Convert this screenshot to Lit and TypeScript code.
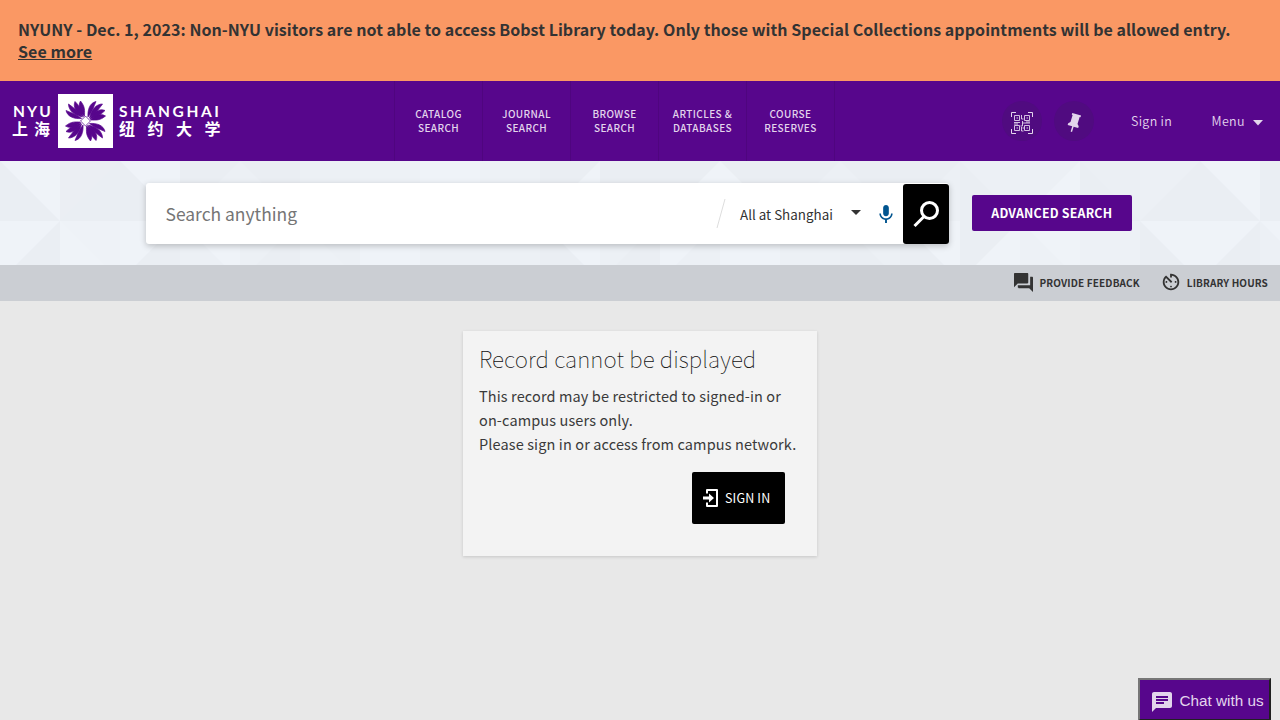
import { LitElement, html, css, svg } from "lit";
import { customElement } from "lit/decorators.js";

const LINKS = [["CATALOG", "SEARCH"], ["JOURNAL", "SEARCH"], ["BROWSE", "SEARCH"], ["ARTICLES &", "DATABASES"], ["COURSE", "RESERVES"]];

// Each tile: colour below the diagonal, colour above it, diagonal direction.
const L = "#eff3f8", D = "#eaeef3", M = "#ecf0f5", N = "#edf1f6";
type Tile = [string, string, string];
const TOP: Tile[] = [
  [D, L, "\\"], [D, "#ebeef3", "/"], [D, L, "\\"], [M, D, "/"], [M, D, "\\"], [M, M, "/"], [N, N, "/"], [L, L, "/"], [N, N, "/"], [L, D, "/"],
  [D, D, "/"], [L, D, "/"], [L, D, "\\"], [M, D, "/"], [M, D, "\\"], [M, D, "/"], [D, M, "\\"], [L, M, "/"], [D, "#ebeff4", "\\"], [D, M, "/"], [D, L, "\\"], [D, D, "/"],
];
const BOTTOM: Tile[] = [
  [D, L, "/"], [L, "#eef2f7", "\\"], [D, L, "/"], [M, L, "\\"], [D, M, "/"], [N, M, "\\"], [L, L, "/"], [M, M, "/"], [M, M, "/"], [D, L, "\\"],
  [D, M, "/"], [M, L, "/"], [L, L, "/"], [M, M, "/"], [D, M, "\\"], [D, L, "\\"], [L, D, "/"], [N, L, "\\"], [N, N, "\\"], [D, L, "\\"], [D, L, "/"], [M, L, "\\"],
];

const tile = ([low, high, dir]: Tile, col: number, row: number) => {
  const x = col * 60, y = row * 60;
  const tri = dir === "\\" ? `${x},${y} ${x},${y + 60} ${x + 60},${y + 60}` : `${x + 60},${y} ${x},${y + 60} ${x + 60},${y + 60}`;
  return svg`<rect x=${x} y=${y} width="60" height="60" fill=${high}></rect><polygon points=${tri} fill=${low}></polygon>`;
};

@customElement("app-root")
export class AppRoot extends LitElement {
  static styles = css`
    :host { display: block; height: 720px; overflow: hidden; background: #e8e8e8; color: #333; position: relative;
      font-family: "Noto Sans CJK SC", sans-serif; }
    * { box-sizing: border-box; }
    svg { display: block; flex: none; }
    .alert { height: 81px; background: #fa9864; padding: 18px 18px; font-size: 16px; line-height: 22px; font-weight: 700; white-space: nowrap; letter-spacing: .05px; }
    .alert a { text-decoration: underline; }
    .top { height: 80px; background: #57068c; display: grid; grid-template-columns: 394px 441px 1fr; color: #e3d5ec; }
    .brand { padding: 13px 0 0 12px; display: flex; color: #fff; }
    .word { display: flex; flex-direction: column; font-family: Lato, sans-serif; font-weight: 700; }
    .en { font-size: 15.5px; line-height: 16px; letter-spacing: 2.6px; margin-top: 9px; white-space: nowrap; }
    .zh { font-family: "Noto Sans CJK SC", sans-serif; font-size: 16px; line-height: 18px; letter-spacing: 6px; font-weight: 700; white-space: nowrap; }
    .left { width: 46px; }
    .left .en { letter-spacing: 2.1px; padding-left: 1px; }
    .right { margin-left: 6px; }
    .right .zh { letter-spacing: 12.5px; }
    .links { display: flex; }
    .link { width: 88px; border-left: 1px solid #4f057f; text-align: center; padding-top: 26px; font-size: 10px; line-height: 14px; font-weight: 500; letter-spacing: .42px; }
    .link:last-child { width: 89px; border-right: 1px solid #4f057f; }
    .user { display: flex; align-items: center; font-size: 12.5px; letter-spacing: .3px; padding-left: 167px; font-weight: 350; }
    .round { width: 40px; height: 40px; border-radius: 50%; background: #500b80; display: grid; place-items: center; margin-right: 12px; }
    .round svg { margin-top: 3px; }
    .signin { margin-left: 25px; padding-bottom: 2px; }
    .menu { margin: 0 8px 0 39.5px; padding-bottom: 2px; }
    .caret { margin-top: 3px; }
    .hero { height: 104px; display: grid; grid-template: 104px / 1280px; }
    .pattern, .search { grid-area: 1 / 1; }
    .search { z-index: 1; display: flex; padding: 22px 0 0 146px; }
    .box { width: 803px; height: 61px; background: #fff; border-radius: 3px; display: flex; align-items: center; padding-left: 19.5px; box-shadow: 0 2px 6px rgba(0,0,0,.22); }
    .query { flex: 1; font-size: 17.45px; color: #757575; padding-bottom: 1px; }
    .scope { font-size: 13.4px; width: 111px; margin-left: 14px; }
    .go { width: 46px; height: 60px; background: #000; border-radius: 3px; display: grid; place-items: center; }
    .mic { margin: 0 10px 0 18px; }
    .adv { margin: 12px 0 0 22.5px; width: 160.5px; height: 36px; border-radius: 2px; background: #57068c; color: #fff; font-weight: 700; font-size: 12.4px; line-height: 36px; text-align: center; letter-spacing: .2px; }
    .tools { height: 36px; background: #cbced3; display: flex; justify-content: flex-end; align-items: center; padding: 0 12px 2px 0; font-size: 10px; font-weight: 700; letter-spacing: .14px; }
    .tool { display: flex; align-items: center; }
    .hours { margin-left: 20px; }
    .tool svg { margin-right: 7px; }
    .tool.hours svg { margin-right: 5px; }
    .card { width: 354px; height: 225px; margin: 30px auto 0 463px; background: #f3f3f3; box-shadow: 0 1px 3px rgba(0,0,0,.15); padding: 11px 16px; }
    h2 { margin: 0; font-weight: 100; font-size: 22.5px; line-height: 32px; letter-spacing: .1px; white-space: nowrap; color: #111; }
    p { margin: 10px 0 0; font-size: 14.5px; line-height: 24px; white-space: nowrap; letter-spacing: .12px; color: #3a3a3a; }
    .btn { margin: 16px 16px 0 auto; width: 93px; height: 52px; border-radius: 2px; background: #000; color: #fff; display: flex; align-items: center; padding: 0 0 1px 10px; font-size: 12.5px; letter-spacing: .15px; }
    .btn svg { margin-right: 5px; }
    .chat { position: absolute; left: 1138px; top: 678px; width: 133px; height: 43px; border: 2px solid; border-color: #767676 #212121 #212121 #767676; background: #57068c; color: #e3d5ec; display: flex; align-items: center; padding: 2px 0 0 10px; font: 15.3px "Liberation Sans", sans-serif; white-space: nowrap; }
    .chat svg { margin: 2px 5.5px 0 0; }
  `;

  render() {
    const petals = svg`<path d="M-1-5C-1-10 0-14-5-20C-8-15-6-9-1-5Z"></path><path d="M-2-4.500C-4-10-5-14-10.500-19.500C-13-14-9-8-2-4.500Z"></path><path d="M-3-4C-7-9-10-12-17-17C-17-11-12-6-3-4Z"></path><path d="M-4-2.500C-9-7-14-8-19.500-10.500C-18-4-11-2-4-2.500Z"></path>`;
    return html`
      <div class="alert"><div>NYUNY - Dec. 1, 2023: Non-NYU visitors are not able to access Bobst Library today. Only those with Special Collections appointments will be allowed entry.</div><a>See more</a></div>
      <header class="top">
        <div class="brand">
          <div class="word left"><span class="en">NYU</span><span class="zh">上海</span></div>
          <svg width="55" height="54" viewBox="-27.500 -27 55 54"><rect x="-27.500" y="-27" width="55" height="54" fill="#fff"></rect>
            <g fill="#57068c" stroke="#57068c" stroke-width=".7">${[0, 90, 180, 270].map(a => svg`<g transform="rotate(${a})">${petals}</g>`)}</g>
            <rect x="-3.500" y="-3.500" width="7" height="7" transform="rotate(45)" fill="#fff" stroke="#57068c" stroke-width=".7"></rect></svg>
          <div class="word right"><span class="en">SHANGHAI</span><span class="zh">纽约大学</span></div>
        </div>
        <nav class="links">${LINKS.map(([a, b]) => html`<div class="link">${a}<br>${b}</div>`)}</nav>
        <div class="user">
          <div class="round"><svg width="24" height="24" viewBox="0 0 24 24" fill="none" stroke="#e3d5ec"><path d="M1.500 6V1.500H6M18 1.500H22.500V6M22.500 18V22.500H18M6 22.500H1.500V18"></path><path stroke-width=".9" d="M4.500 4.500h5v5h-5zM14.500 4.500h5v5h-5zM4.500 14.500h5v5h-5zM14.500 14.500h5v5h-5zM6.500 7h1.500M16.500 7h1.500M6.500 17h1.500M16.500 17h1.500M11.500 4v4h2M4 11.500h6M12.500 10v5h-2M12 12h8M11.500 16v4h2M12.500 17h2M4 13h4M16 11h4"></path></svg></div>
          <div class="round"><svg width="22" height="22" viewBox="0 0 24 24"><path transform="rotate(17 12 12)" fill="#e3d5ec" d="M16 12V4h1V2H7v2h1v8l-2 2v2h5.200v6h1.600v-6H18v-2l-2-2z"></path></svg></div>
          <span class="signin">Sign in</span><span class="menu">Menu</span>
          <svg class="caret" width="10" height="6" viewBox="0 0 10 6"><path fill="#e3d5ec" d="M0 0h10L5 5.500z"></path></svg>
        </div>
      </header>
      <section class="hero">
        <svg class="pattern" width="1280" height="104">${TOP.map((t, i) => tile(t, i, 0))}${BOTTOM.map((t, i) => tile(t, i, 1))}</svg>
        <div class="search">
          <div class="box">
            <span class="query">Search anything</span>
            <svg width="10" height="30" viewBox="0 0 10 30"><path d="M9 0L1 29" stroke="#ddd" fill="none"></path></svg>
            <span class="scope">All at Shanghai</span>
            <svg width="10" height="10" viewBox="0 0 10 10"><path fill="#333" d="M0 1h10L5 6z"></path></svg>
            <svg class="mic" width="14" height="18" viewBox="5 2 14 19"><path fill="#00548f" d="M12 14c1.660 0 2.990-1.340 2.990-3L15 5c0-1.660-1.340-3-3-3S9 3.340 9 5v6c0 1.660 1.340 3 3 3zm5.300-3c0 3-2.540 5.100-5.300 5.100S6.700 14 6.700 11H5c0 3.410 2.720 6.230 6 6.720V21h2v-3.280c3.280-.48 6-3.300 6-6.720h-1.700z"></path></svg>
            <div class="go"><svg width="28" height="28" viewBox="0 0 28 28" fill="none" stroke="#fff" stroke-width="3"><circle cx="17.500" cy="10.500" r="8"></circle><path d="M12 16.500L2.500 26"></path></svg></div>
          </div>
          <div class="adv">ADVANCED SEARCH</div>
        </div>
      </section>
      <div class="tools">
        <div class="tool"><svg width="19" height="19" viewBox="2 2 20 20"><path fill="#333" d="M21 6h-2v9H6v2c0 .55.45 1 1 1h11l4 4V7c0-.55-.45-1-1-1zm-4 6V3c0-.55-.45-1-1-1H3c-.55 0-1 .45-1 1v14l4-4h10c.55 0 1-.45 1-1z"></path></svg>PROVIDE FEEDBACK</div>
        <div class="tool hours"><svg width="22" height="22" viewBox="0 0 24 24"><path fill="#333" d="M11 17c0 .55.45 1 1 1s1-.45 1-1-.45-1-1-1-1 .45-1 1zm0-14v4h2V5.080c3.390.49 6 3.390 6 6.920 0 3.870-3.130 7-7 7s-7-3.130-7-7c0-1.680.59-3.220 1.580-4.420L12 13l1.410-1.410-6.800-6.800v.02C4.420 6.450 3 9.050 3 12c0 4.970 4.020 9 9 9 4.970 0 9-4.030 9-9s-4.030-9-9-9h-1zm7 9c0-.55-.45-1-1-1s-1 .45-1 1 .45 1 1 1 1-.45 1-1zM6 12c0 .55.45 1 1 1s1-.45 1-1-.45-1-1-1-1 .45-1 1z"></path></svg>LIBRARY HOURS</div>
      </div>
      <main class="card">
        <h2>Record cannot be displayed</h2>
        <p>This record may be restricted to signed-in or<br>on-campus users only.<br>Please sign in or access from campus network.</p>
        <div class="btn"><svg width="18" height="20" viewBox="0 0 18 20"><path fill="none" stroke="#fff" stroke-width="2" stroke-linejoin="round" d="M5 5.500V2h10v16H5v-3.500"></path><path fill="#fff" d="M1 8.500h6V5.500L12 10l-5 4.500v-3H1z"></path></svg>SIGN IN</div>
      </main>
      <div class="chat"><svg width="24" height="24" viewBox="0 0 24 24"><path fill="#e3d5ec" d="M20 2H4c-1.100 0-1.990.9-1.990 2L2 22l4-4h14c1.100 0 2-.9 2-2V4c0-1.100-.9-2-2-2zM6 9h12v2H6V9zm8 5H6v-2h8v2zm4-6H6V6h12v2z"></path></svg>Chat with us</div>
    `;
  }
}
